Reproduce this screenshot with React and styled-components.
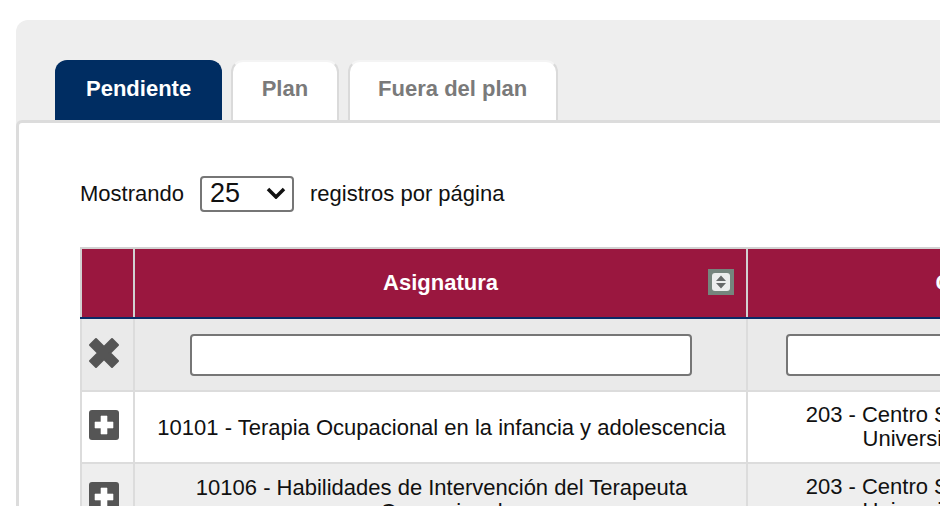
import React from 'react'
import styled, { createGlobalStyle } from 'styled-components'

const rows = [
    {
        code: '10101 - Terapia Ocupacional en la infancia y adolescencia',
        centre: ['203 - Centro Superior de Estudios', 'Universitarios La Salle'],
    },
    {
        code: '10106 - Habilidades de Intervención del Terapeuta Ocupacional',
        centre: ['203 - Centro Superior de Estudios', 'Universitarios La Salle'],
    },
]

function SortIcon() {
    return (
        <SortSvg viewBox="0 0 26 26">
            <rect width="26" height="26" fill="#75857d" />
            <rect x="4" y="4" width="18" height="18" rx="3" fill="#eceeed" />
            <path d="M13 6.5 L18 12 H8 Z M13 19.5 L18 14 H8 Z" fill="#666a69" />
        </SortSvg>
    )
}

function ClearIcon() {
    return (
        <IconSvg width="32" height="32" viewBox="0 0 32 32">
            <path d="M16 10 L24 2 L30 8 L22 16 L30 24 L24 30 L16 22 L8 30 L2 24 L10 16 L2 8 L8 2 Z" fill="#555" stroke="#555" strokeWidth="2" strokeLinejoin="round" />
        </IconSvg>
    )
}

function PlusIcon() {
    return (
        <IconSvg width="30" height="30" viewBox="0 0 30 30">
            <rect width="30" height="30" rx="3" fill="#555" />
            <path d="M12 6 H18 V12 H24 V18 H18 V24 H12 V18 H6 V12 H12 Z" fill="#fff" stroke="#fff" strokeWidth="0.6" strokeLinejoin="round" />
        </IconSvg>
    )
}

export default function App() {
    return (
        <>
            <GlobalStyle />
            <Page>
                <Tabs>
                    <Tab $active>Pendiente</Tab>
                    <Tab>Plan</Tab>
                    <Tab>Fuera del plan</Tab>
                </Tabs>
                <Content>
                    <Toolbar>
                        <span>Mostrando</span>
                        <SelectWrap>
                            <PageSize defaultValue="25">
                                <option>10</option>
                                <option>25</option>
                                <option>50</option>
                            </PageSize>
                            <Chevron viewBox="0 0 20 12">
                                <path d="M2 2 L10 10 L18 2" fill="none" stroke="#111" strokeWidth="3.5" />
                            </Chevron>
                        </SelectWrap>
                        <span>registros por página</span>
                    </Toolbar>
                    <Table>
                        <colgroup>
                            <col width="53" />
                            <col width="613" />
                            <col width="448" />
                        </colgroup>
                        <thead>
                            <tr>
                                <HeadCell />
                                <HeadCell>
                                    Asignatura
                                    <SortIcon />
                                </HeadCell>
                                <HeadCell>
                                    Centro
                                    <SortIcon />
                                </HeadCell>
                            </tr>
                            <FilterRow>
                                <IconCell><ClearIcon /></IconCell>
                                <Cell><FilterInput $inset={54.5} /></Cell>
                                <Cell><FilterInput $inset={38} /></Cell>
                            </FilterRow>
                        </thead>
                        <tbody>
                            {rows.map((row, i) => (
                                <BodyRow key={row.code} $odd={i % 2 === 1}>
                                    <IconCell><PlusIcon /></IconCell>
                                    <SubjectCell>{row.code}</SubjectCell>
                                    <CentreCell>{row.centre[0]}<br />{row.centre[1]}</CentreCell>
                                </BodyRow>
                            ))}
                        </tbody>
                    </Table>
                </Content>
            </Page>
        </>
    )
}

const GlobalStyle = createGlobalStyle`
    html, body {
        margin: 0;
        height: 506px;
        overflow: hidden;
        background: #fff;
        font-family: "Liberation Sans", Arial, sans-serif;
        font-size: 22px;
        color: #111;
    }
`
const Page = styled.div`
    margin: 20px 0 0 16px;
    padding-top: 40px;
    width: 1300px;
    height: 600px;
    background: #eee;
    border-radius: 12px 0 0 0;
`
const Tabs = styled.div`
    display: flex;
    gap: 9px;
    padding-left: 39px;
`
const Tab = styled.div`
    box-sizing: border-box;
    height: 60px;
    padding: 0 ${props => props.$active ? '29px' : '28.5px'} 4px;
    display: flex;
    align-items: center;
    justify-content: center;
    font-weight: bold;
    color: ${props => props.$active ? '#fff' : '#7a7a7a'};
    background: ${props => props.$active ? '#002d62' : '#fff'};
    border: 2px solid ${props => props.$active ? '#002d62' : '#dadada'};
    border-top-color: ${props => props.$active ? '#002d62' : '#f4f4f4'};
    border-bottom: none;
    border-radius: 12px 12px 0 0;
`
const Content = styled.div`
    box-sizing: border-box;
    height: 500px;
    padding: 53px 0 0 61px;
    background: #fff;
    border: 3px solid #dcdcdc;
    border-right: none;
    border-radius: 6px 0 0 0;
`
const Toolbar = styled.div`
    display: flex;
    align-items: center;
    gap: 16px;
    height: 36px;
    margin-bottom: 35px;
`
const SelectWrap = styled.div`
    position: relative;
    display: flex;
`
const PageSize = styled.select`
    box-sizing: border-box;
    width: 94px;
    height: 36px;
    padding: 0 0 2px 8px;
    appearance: none;
    font-family: "Liberation Sans", Arial, sans-serif;
    font-size: 27px;
    color: #111;
    background: #fff;
    border: 2px solid #767676;
    border-radius: 4px;
`
const Chevron = styled.svg`
    position: absolute;
    top: 11px;
    right: 8px;
    width: 20px;
    height: 12px;
    pointer-events: none;
`
const Table = styled.table`
    table-layout: fixed;
    width: 1114px;
    border-collapse: collapse;
    line-height: 24px;
    text-align: center;
`
const HeadCell = styled.th`
    position: relative;
    box-sizing: border-box;
    height: 70px;
    padding: 0 0 1px;
    color: #fff;
    font-size: 22px;
    background: #9a173f;
    border: 2px solid #d2d2d2;
    border-bottom: 2px solid #0b2a66;
`
const SortSvg = styled.svg`
    position: absolute;
    top: 20px;
    right: 12px;
    width: 26px;
    height: 26px;
`
const Cell = styled.td`
    box-sizing: border-box;
    height: 72px;
    padding: 0;
    border: 2px solid #dcdcdc;
`
const SubjectCell = styled(Cell)`
    padding: 2px 0 0 2px;
`
const CentreCell = styled(Cell)`
    padding: 0 0 0 2px;
`
const IconCell = styled(Cell)`
    padding: 0 7px 4px 0;
    line-height: 0;
`
const IconSvg = styled.svg`
    display: inline-block;
`
const FilterRow = styled.tr`
    height: 73px;
    background: #eaeaea;
`
const BodyRow = styled.tr`
    background: ${props => props.$odd ? '#eee' : '#fff'};
`
const FilterInput = styled.input`
    display: block;
    box-sizing: border-box;
    width: calc(100% - ${props => props.$inset * 2}px);
    height: 42px;
    margin: 0 auto;
    background: #fff;
    border: 2px solid #767676;
    border-radius: 4px;
`
